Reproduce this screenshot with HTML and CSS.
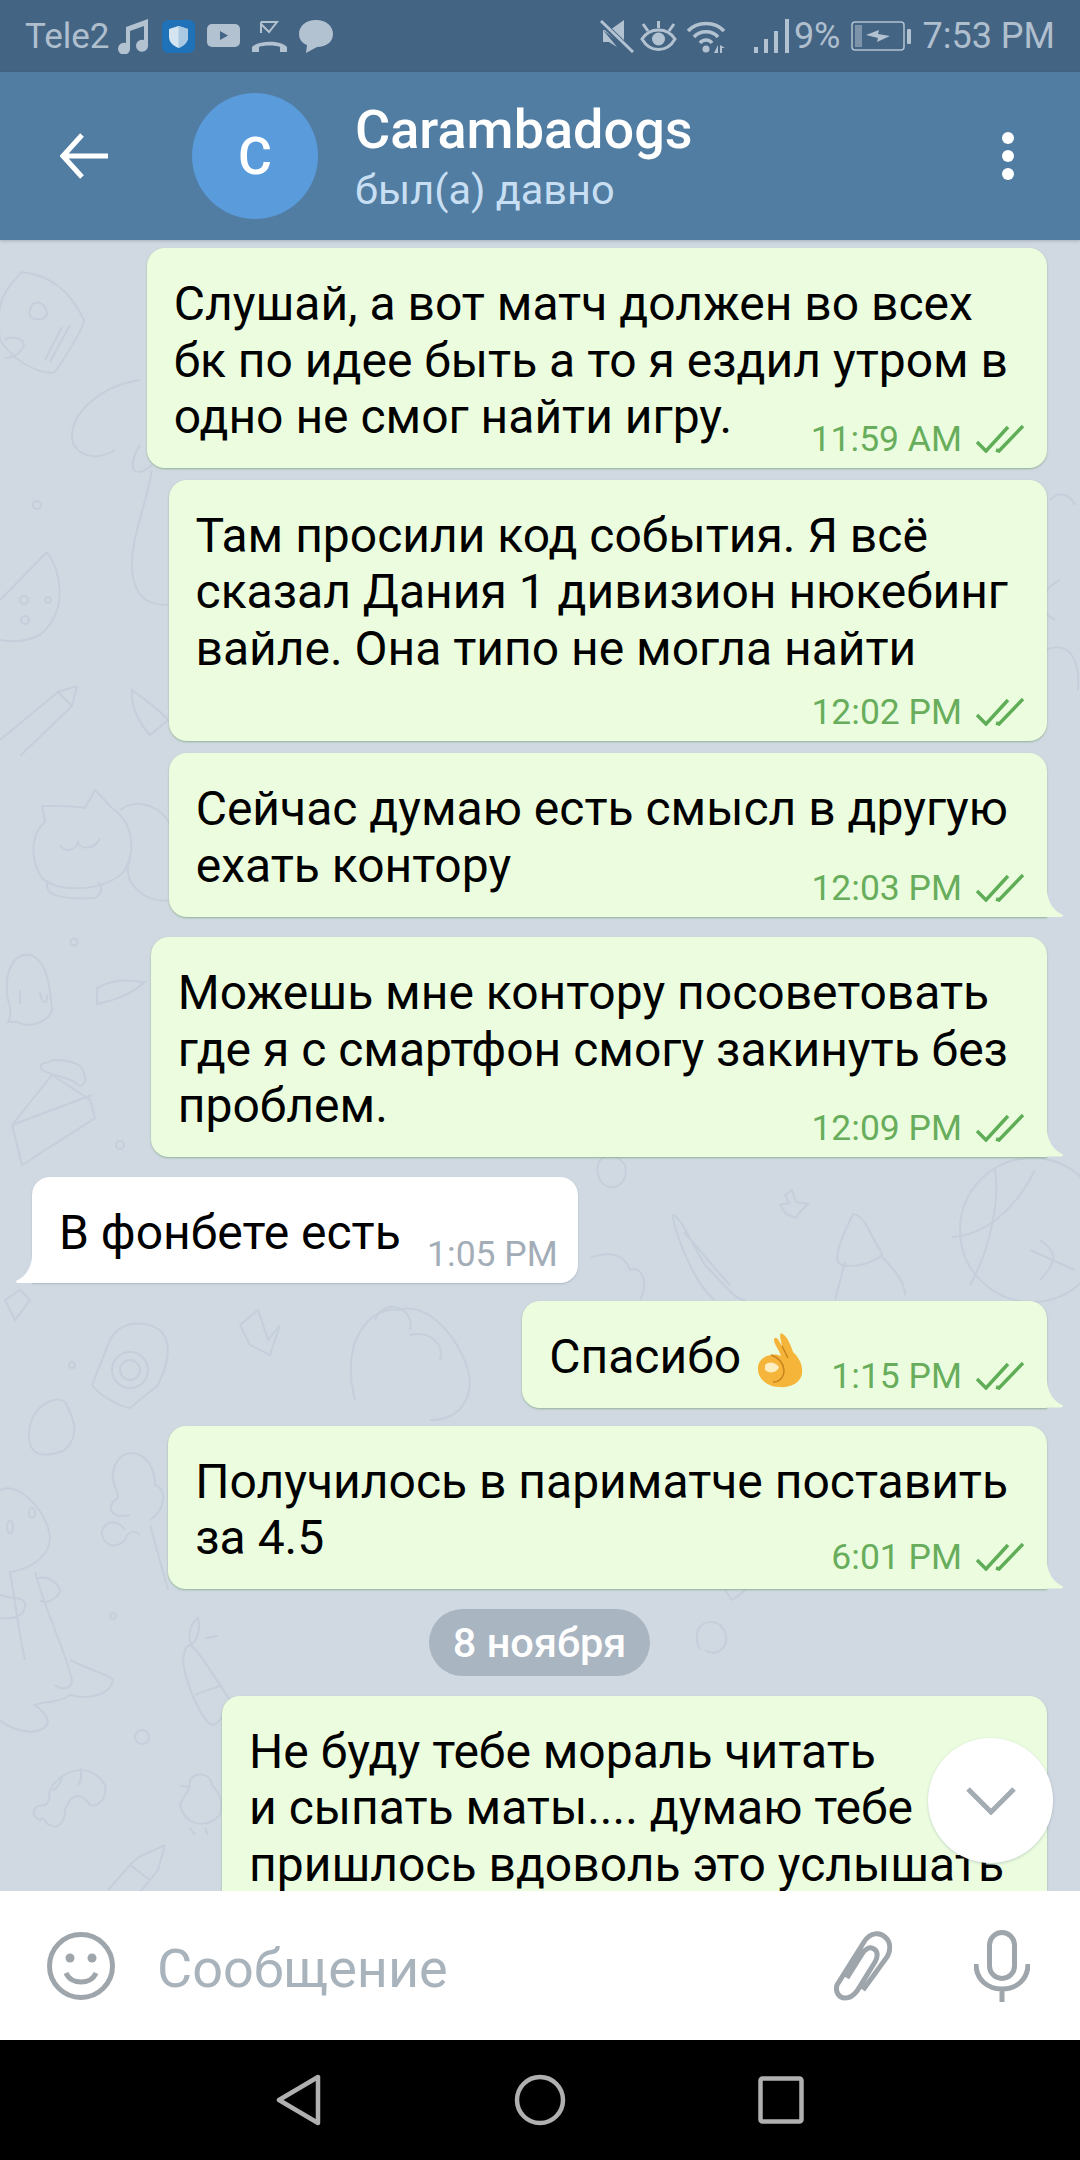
FILE: index.html
```html
<!DOCTYPE html>
<html>
<head>
  <title>Carambadogs</title>
  <meta charset="UTF-8" />
  <link rel="stylesheet" href="styles.css">
</head>
<body>
  <div class="status">
    <div class="status-left">
      <span class="carrier">Tele2</span>
      <svg class="ic" width="32" height="36" viewBox="0 0 32 36"><path class="fill" d="M8 9 L30 1 V27 A6 6 0 1 1 26 22 V8 L12 13 V30 A6 6 0 1 1 8 25 Z"/></svg>
      <svg class="ic tile" width="33" height="33" viewBox="0 0 33 33"><rect width="33" height="33" rx="6" fill="#1f72b8"/><path d="M16.500 6 L26 9 V17 C26 23 21 26 16.500 28 C12 26 7 23 7 17 V9 Z" fill="#d4e4f0"/><path d="M16.500 6 L26 9 V17 C26 23 21 26 16.500 28 Z" fill="#a9c9e2"/></svg>
      <svg class="ic" width="33" height="24" viewBox="0 0 33 24"><rect class="fill" width="33" height="23" rx="5"/><path d="M13 7 L21 11.500 L13 16 Z" fill="#446484"/></svg>
      <svg class="ic" width="35" height="31" viewBox="0 0 35 31"><path class="line" d="M9 1 H25 L17 11 L9 3 V12" stroke-width="2"/><path class="fill" d="M0 31 V26 C6 19 29 19 35 26 V31 H28 V26 C24 24 11 24 7 26 V31 Z"/></svg>
      <svg class="ic" width="34" height="33" viewBox="0 0 34 33"><path class="fill" d="M17 0 C27 0 34 6 34 14 C34 22 27 27 18 27 L7 33 L8 25 C3 23 0 19 0 14 C0 6 7 0 17 0 Z"/></svg>
    </div>
    <div class="status-right">
      <svg class="ic mute" width="34" height="33" viewBox="0 0 34 33"><path class="fill" d="M3 10 H10 L24 0 V13 L24 26 Z M3 10 V22 H9 L17 27 Z"/><path d="M0 1 L32 32" stroke="#446484" stroke-width="6"/><path class="line" d="M1 1 L33 32" stroke-width="3"/></svg>
      <svg class="ic" width="37" height="31" viewBox="0 0 37 31"><path class="line" d="M2 18 C10 6 27 6 35 18 C27 32 10 32 2 18 Z M3 3 L8 10 M18.500 0 V7 M34 3 L29 10" stroke-width="3"/><circle class="fill" cx="18.500" cy="18" r="6.500"/></svg>
      <svg class="ic" width="40" height="33" viewBox="0 0 40 33"><path class="line" d="M1 11 C10 1 28 1 37 11 M7 17 C13 10 25 10 31 17 M13 23 C16 19 22 19 25 23" stroke-width="3.500"/><circle class="fill" cx="19" cy="29" r="3.500"/><path class="fill" d="M31 25 V33 H27 Z M33 25 L38 28 H35 V33 H33 Z"/></svg>
      <svg class="ic sig" width="36" height="34" viewBox="0 0 36 34"><path class="fill" d="M0 28 h4 v6 h-4 Z M10 20 h4 v14 h-4 Z M20 12 h4 v22 h-4 Z M31 0 h4 v34 h-4 Z"/></svg>
      <span class="pct">9%</span>
      <svg class="ic bat" width="60" height="30" viewBox="0 0 60 30"><rect class="line" x="1" y="1" width="52" height="28" rx="3" stroke-width="1.500"/><rect class="fill" x="4" y="4" width="7" height="22" opacity=".5"/><path class="fill" d="M15 14 L28 9 L27 13 L39 15 L26 21 L27 17 Z"/><rect class="fill" x="56" y="8" width="4" height="15" rx="1"/></svg>
      <span class="clock">7:53 PM</span>
    </div>
  </div>

  <header class="topbar">
    <svg class="back" width="48" height="46" viewBox="0 0 48 46"><path d="M22 2 L3 23 L22 44 M3 23 H48" fill="none" stroke="#fff" stroke-width="5"/></svg>
    <div class="avatar">C</div>
    <div class="who">
      <div class="who-name">Carambadogs</div>
      <div class="who-seen">был(а) давно</div>
    </div>
    <div class="dots"><i></i><i></i><i></i></div>
  </header>

  <main class="chat">
    <svg class="doodles" width="1080" height="1652" viewBox="0 240 1080 1652">
      <!-- pillow -->
      <path d="M22 272 C5 290 -5 300 0 340 C20 370 50 375 55 372 C70 350 85 325 84 320 C70 290 50 275 22 272 Z M62 327 L45 360 M70 325 L50 362"/>
      <path d="M30 310 C32 298 45 302 46 310 C50 318 40 320 38 319 C32 320 28 316 30 310 Z M5 340 C10 335 24 338 24 345 C20 355 12 358 4 358"/>
      <!-- mushroom top left -->
      <path d="M72 440 C70 410 105 385 140 380 M72 440 C76 455 95 462 115 450 M140 445 C125 470 135 480 152 465 M152 470 C145 510 130 540 132 570 C135 600 150 605 168 605"/>
      <!-- watermelon -->
      <path d="M47 552 C60 570 70 610 40 635 C20 645 5 640 0 640 M47 552 L0 600"/>
      <circle cx="24" cy="600" r="4"/><circle cx="48" cy="600" r="3"/><circle cx="25" cy="620" r="4"/><circle cx="37" cy="505" r="4"/>
      <!-- pencil -->
      <path d="M77 686 L58 692 L0 740 M77 686 L72 706 L20 756 M58 692 L72 706"/>
      <path d="M132 690 C145 700 160 710 168 720 L150 735 C140 725 130 705 132 690 Z"/>
      <!-- cat -->
      <path d="M42 806 L45 822 C30 835 30 860 42 878 C60 895 110 890 125 870 C138 845 130 820 112 808 L95 790 L85 808 C70 805 55 806 42 806 Z"/>
      <path d="M60 845 C65 852 75 852 78 842 C80 850 95 850 100 838 M48 880 C42 895 60 900 95 898 C105 892 100 885 98 882 M120 810 C140 795 165 810 170 825 M130 860 C120 880 145 905 170 900"/>
      <!-- ghost -->
      <path d="M8 1000 C3 970 15 952 30 955 C48 960 50 990 52 1010 C50 1020 30 1030 18 1022 L8 1022 C12 1015 10 1005 8 1000 Z M20 990 V1004 M40 992 C42 1005 48 1005 47 995"/>
      <circle cx="74" cy="942" r="3.500"/>
      <path d="M97 988 C120 975 140 983 145 982 C130 995 115 1000 97 1004 Z"/>
      <!-- cake -->
      <path d="M12 1125 L52 1075 L90 1100 L95 1118 L22 1165 Z M12 1125 L92 1095 M12 1125 L22 1165 M42 1070 C36 1060 50 1065 52 1060 C60 1060 75 1060 82 1068 C90 1085 80 1090 75 1082 C60 1075 50 1075 42 1070 Z"/>
      <circle cx="120" cy="1145" r="4"/>
      <!-- star, carrot, mushroom, ball -->
      <path d="M785 1195 L792 1190 L796 1202 L808 1204 L800 1212 L796 1218 L786 1214 L780 1205 L789 1203 Z"/>
      <path d="M672 1215 C680 1215 690 1240 705 1265 C725 1285 735 1300 745 1300 M672 1215 C680 1250 700 1290 715 1300 M684 1232 C700 1250 720 1275 730 1285"/>
      <path d="M853 1214 C840 1240 835 1255 838 1262 C845 1270 870 1265 882 1255 L880 1250 C870 1235 865 1215 853 1214 Z M845 1262 L835 1300 M880 1255 C890 1265 905 1280 905 1295"/>
      <circle cx="1032" cy="1230" r="72"/>
      <path d="M952 1237 C985 1235 1015 1210 1035 1170 M995 1170 C1000 1200 990 1250 970 1285 M1030 1250 L1075 1270 M1040 1280 C1060 1260 1055 1250 1040 1240"/>
      <path d="M600 1180 C590 1160 610 1145 625 1165 C630 1185 610 1195 600 1180 Z M590 1258 C610 1250 625 1255 630 1270 C640 1265 650 1280 640 1300"/>
      <!-- camera, frog, star left -->
      <path d="M92 1385 L110 1340 C120 1320 145 1320 160 1330 C175 1345 165 1370 158 1385 L130 1408 C115 1405 100 1395 92 1385 Z"/>
      <circle cx="130" cy="1370" r="18"/><circle cx="130" cy="1370" r="10"/>
      <path d="M258 1310 L268 1340 L280 1325 L270 1355 L250 1345 L240 1325 Z"/>
      <path d="M355 1400 C340 1340 370 1305 400 1310 C430 1300 465 1345 470 1380 C470 1400 460 1420 430 1420 M375 1320 A18 18 0 1 1 410 1330 M410 1335 C430 1330 445 1345 440 1360"/>
      <circle cx="72" cy="1365" r="3"/>
      <path d="M10 1425 C5 1455 20 1460 45 1450 C60 1435 55 1420 45 1402 C35 1395 15 1405 10 1425 Z" transform="translate(20 0)"/>
      <!-- dino -->
      <path d="M0 1490 C20 1480 50 1515 50 1540 C48 1560 25 1570 10 1572 C15 1600 20 1640 25 1660 M35 1572 C45 1610 65 1650 72 1680 C72 1690 60 1690 55 1685 M70 1660 C90 1670 110 1675 113 1680 C110 1695 90 1700 70 1695 C55 1705 45 1700 35 1705 C55 1720 50 1730 30 1732 C15 1730 5 1725 0 1720"/>
      <path d="M38 1578 C50 1575 60 1585 60 1592 C55 1600 45 1605 40 1600 M0 1595 C10 1600 25 1595 25 1605 C25 1615 15 1620 0 1618"/>
      <ellipse cx="10" cy="1527" rx="3" ry="6"/><ellipse cx="32" cy="1513" rx="3" ry="5"/>
      <!-- tree -->
      <path d="M150 1520 C165 1510 168 1490 155 1485 C155 1455 130 1445 118 1460 C105 1480 120 1490 118 1498 C105 1505 110 1520 130 1515 M150 1525 L168 1590 M125 1530 C115 1515 100 1525 102 1535 C105 1545 115 1550 125 1540 C128 1530 135 1530 140 1535"/>
      <circle cx="113" cy="1616" r="3"/>
      <!-- popsicle -->
      <path d="M190 1645 C200 1650 222 1690 230 1700 C225 1710 220 1725 212 1725 C200 1720 180 1670 184 1655 C184 1650 187 1645 190 1645 Z M195 1695 C205 1690 210 1690 222 1685 M198 1618 C188 1625 188 1640 192 1645 C200 1635 200 1625 198 1618 Z M205 1638 L218 1636"/>
      <circle cx="142" cy="1737" r="7"/>
      <!-- shrimp -->
      <path d="M50 1790 C60 1770 90 1760 105 1785 C108 1800 95 1808 90 1805 C80 1790 70 1795 65 1810 C65 1822 58 1830 50 1825 C45 1825 45 1815 40 1820 C30 1815 32 1805 45 1805 C52 1800 48 1795 50 1790 Z M80 1767 C82 1775 82 1780 78 1785 M62 1778 C60 1785 55 1790 52 1790"/>
      <!-- chick -->
      <path d="M190 1780 C195 1772 210 1772 212 1785 C215 1790 225 1795 220 1815 C205 1830 185 1825 180 1805 C182 1795 190 1795 190 1780 Z M180 1786 L190 1787 M190 1828 L195 1835 M205 1828 L208 1835"/>
      <!-- bottle -->
      <path d="M165 1845 L150 1852 C140 1855 135 1860 130 1865 L108 1890 M165 1845 L158 1870 L150 1880 L140 1892 M130 1865 L150 1880"/>
      <path d="M1050 500 C1060 490 1070 495 1075 505 M1060 580 C1040 590 1035 610 1055 620 M1045 650 C1070 640 1080 660 1078 690"/>
      <path d="M20 1290 L30 1300 L15 1320 L5 1300 Z"/>
      <path d="M630 1490 C640 1475 660 1480 660 1495 C660 1510 640 1525 632 1530 C620 1515 615 1495 630 1490 Z" transform="translate(100 70)"/>
      <path d="M700 1650 C690 1630 705 1615 720 1625 C735 1640 720 1660 705 1650"/>
    </svg>

    <div class="msgs">
      <div class="bubble out">
        Слушай, а вот матч должен во всех<br>бк по идее быть а то я ездил утром в<br>одно не смог найти игру.
        <span class="meta">11:59 AM <svg class="checks" width="48" height="28" viewBox="0 0 48 28"><path d="M1 17 L10 26 L32 2 M20 25 L23 26 L47 1"/></svg></span>
      </div>
      <div class="bubble out near meta-below">
        Там просили код события. Я всё<br>сказал Дания 1 дивизион нюкебинг<br>вайле. Она типо не могла найти
        <span class="meta">12:02 PM <svg class="checks" width="48" height="28" viewBox="0 0 48 28"><path d="M1 17 L10 26 L32 2 M20 25 L23 26 L47 1"/></svg></span>
      </div>
      <div class="bubble out near tail two-line">
        Сейчас думаю есть смысл в другую<br>ехать контору
        <span class="meta">12:03 PM <svg class="checks" width="48" height="28" viewBox="0 0 48 28"><path d="M1 17 L10 26 L32 2 M20 25 L23 26 L47 1"/></svg></span>
      </div>
      <div class="bubble out tail far">
        Можешь мне контору посоветовать<br>где я с смартфон смогу закинуть без<br>проблем.
        <span class="meta">12:09 PM <svg class="checks" width="48" height="28" viewBox="0 0 48 28"><path d="M1 17 L10 26 L32 2 M20 25 L23 26 L47 1"/></svg></span>
      </div>
      <div class="bubble in tail far short-in">
        В фонбете есть
        <span class="meta">1:05 PM</span>
      </div>
      <div class="bubble out tail short-out raised">
        Спасибо
        <svg class="ok" width="46" height="56" viewBox="0 0 46 56"><path d="M24 1 C30 3 34 14 36 20 C42 26 46 32 45 42 C43 52 32 56 22 55 C10 55 1 46 1 38 C0 30 6 24 14 23 C18 22 22 23 24 24 C22 18 17 12 17 8 C17 5 20 5 22 9 L25 14 C24 9 22 3 24 1 Z" fill="#f5b53a"/><path d="M8 33 C12 29 18 30 22 35 C20 41 12 42 8 38 Z" fill="#fdeec0"/><path d="M25 14 L31 26 M14 23 C20 25 26 30 27 38 C27 46 22 50 16 50" fill="none" stroke="#c9831f" stroke-width="1.500"/></svg>
        <span class="meta">1:15 PM <svg class="checks" width="48" height="28" viewBox="0 0 48 28"><path d="M1 17 L10 26 L32 2 M20 25 L23 26 L47 1"/></svg></span>
      </div>
      <div class="bubble out tail raised">
        Получилось в париматче поставить<br>за 4.5
        <span class="meta">6:01 PM <svg class="checks" width="48" height="28" viewBox="0 0 48 28"><path d="M1 17 L10 26 L32 2 M20 25 L23 26 L47 1"/></svg></span>
      </div>
      <div class="date">8 ноября</div>
      <div class="bubble out cut">
        Не буду тебе мораль читать<br>и сыпать маты.... думаю тебе<br>пришлось вдоволь это услышать
      </div>
    </div>

    <div class="scroll-down">
      <svg width="50" height="28" viewBox="0 0 50 28"><path d="M2 2 L25 25 L48 2" fill="none" stroke="#a3abb3" stroke-width="5"/></svg>
    </div>
  </main>

  <div class="composer">
    <svg class="smile" width="68" height="70" viewBox="0 0 68 70"><circle class="cline" cx="34" cy="35" r="31.500"/><circle cx="23" cy="27" r="4.500" fill="#9ea5ab"/><circle cx="45" cy="27" r="4.500" fill="#9ea5ab"/><path class="cline" d="M19 42 C24 54 44 54 49 42"/></svg>
    <div class="placeholder">Сообщение</div>
    <svg class="clip" width="58" height="70" viewBox="0 0 58 70"><path class="cline" d="M11 67 C5 67 1 61 3 54 L30 11 C36 1 46 1 51 6 C57 11 57 19 53 26 L29 59 M11 67 C17 67 20 64 23 60 L41 31 C44 26 44 20 40 18 C36 15 31 18 28 23 L13 47"/></svg>
    <svg class="mic" width="56" height="72" viewBox="0 0 56 72"><rect class="cline" x="15.500" y="2.500" width="25" height="46" rx="12.500"/><path class="cline" d="M2 34 C2 50 14 59 28 59 C42 59 54 50 54 34 M28 59 V72"/></svg>
  </div>

  <nav class="navbar">
    <svg width="46" height="52" viewBox="0 0 46 52"><path class="nline" d="M42 3 V49 L3 26 Z"/></svg>
    <svg width="52" height="52" viewBox="0 0 52 52"><circle class="nline" cx="26" cy="26" r="23"/></svg>
    <svg width="46" height="48" viewBox="0 0 46 48"><rect class="nline" x="2.500" y="2.500" width="41" height="43" rx="2"/></svg>
  </nav>
</body>
</html>
```

FILE: styles.css
```css
* {
  box-sizing: border-box;
}
html, body {
  margin: 0;
  padding: 0;
}
body {
  width: 1080px;
  height: 2160px;
  display: flex;
  flex-direction: column;
  overflow: hidden;
  font-family: Roboto, "Liberation Sans", sans-serif;
  background: #000;
}

/* status bar */
.status {
  height: 72px;
  flex: none;
  display: flex;
  justify-content: space-between;
  align-items: center;
  padding: 0 25px;
  background: #446484;
  color: #b0bfce;
  font-size: 36px;
}
.status-left, .status-right {
  display: flex;
  align-items: center;
}
.status-left {
  gap: 12px;
}
.status-right {
  gap: 10px;
}
.carrier {
  font-size: 35px;
  margin-right: -4px;
}
.ic .fill {
  fill: #b3c2d0;
}
.ic .line {
  fill: none;
  stroke: #b3c2d0;
}
.mute {
  margin-right: -4px;
}
.sig {
  margin-left: 17px;
}
.sig + .pct {
  margin-left: -6px;
}
.bat {
  margin-left: 0;
}
.clock {
  margin-left: 2px;
}

/* top bar */
.topbar {
  height: 168px;
  flex: none;
  display: flex;
  align-items: center;
  padding: 0 60px;
  background: #517da2;
  color: #fff;
  position: relative;
  z-index: 2;
  box-shadow: 0 1px 3px rgba(60, 80, 100, 0.3);
}
.back {
  margin-right: 84px;
}
.avatar {
  width: 126px;
  height: 126px;
  flex: none;
  display: flex;
  align-items: center;
  justify-content: center;
  border-radius: 50%;
  background: #5a9bdc;
  font-size: 52px;
  font-weight: 500;
  margin-right: 37px;
}
.who {
  flex: 1;
  margin-top: 6px;
}
.who-name {
  font-size: 54px;
  font-weight: 500;
  line-height: 60px;
}
.who-seen {
  font-size: 41.500px;
  line-height: 59px;
  color: #c8dff3;
}
.dots {
  display: flex;
  flex-direction: column;
  gap: 6px;
  margin-right: 6px;
}
.dots i {
  width: 12px;
  height: 12px;
  border-radius: 50%;
  background: #fff;
}

/* messages */
.chat {
  flex: 1;
  min-height: 0;
  position: relative;
  overflow: hidden;
  background: #d0d9e2;
}
.doodles {
  position: absolute;
  left: 0;
  top: 0;
  fill: none;
  stroke: #c5cfdb;
  stroke-width: 2;
}
.msgs {
  position: relative;
  display: flex;
  flex-direction: column;
  align-items: flex-end;
  padding: 8px 33px 0 32px;
}
.bubble {
  position: relative;
  padding: 28px 39px 22px 27px;
  margin-top: 18px;
  border-radius: 18px;
  font-size: 48px;
  line-height: 56.500px;
  color: #000;
  white-space: nowrap;
}
.bubble:first-child {
  margin-top: 0;
}
.bubble.near {
  margin-top: 12px;
}
.bubble.far {
  margin-top: 20px;
}
.bubble.out {
  background: #ecfddf;
  box-shadow: 0 1px 2px rgba(90, 140, 80, 0.5);
}
.bubble.in {
  background: #fff;
  align-self: flex-start;
  box-shadow: 0 1px 2px rgba(100, 120, 140, 0.35);
}
.meta-below {
  padding-bottom: 64px;
}
.two-line {
  padding-bottom: 23px;
}
.short-in {
  padding-right: 177px;
}
.short-out {
  padding-right: 244px;
}
.cut {
  margin-top: 20px;
  padding-right: 43px;
  padding-bottom: 60px;
}
.meta {
  position: absolute;
  right: 23px;
  bottom: 5px;
  display: flex;
  align-items: center;
  gap: 14px;
  font-size: 35.500px;
  line-height: 48px;
  color: #68ad5c;
}
.raised .meta {
  bottom: 8px;
}
.in .meta {
  right: 20px;
  color: #a3adb7;
}
.checks {
  fill: none;
  stroke: #5fae57;
  stroke-width: 3.500;
}
.ok {
  vertical-align: -5px;
  margin: -10px 0 -10px 4px;
}
.tail.out {
  border-bottom-right-radius: 0;
}
.tail.out::after {
  content: "";
  position: absolute;
  right: -16px;
  bottom: 0;
  width: 16px;
  height: 26px;
  background: #ecfddf;
  clip-path: path("M0 0 C1 12 7 20 16 24 Q16 26 14 26 L0 26 Z");
}
.tail.in {
  border-bottom-left-radius: 0;
}
.tail.in::after {
  content: "";
  position: absolute;
  left: -16px;
  bottom: 0;
  width: 16px;
  height: 26px;
  background: #fff;
  clip-path: path("M16 0 C15 12 9 20 0 24 Q0 26 2 26 L16 26 Z");
}
.date {
  align-self: center;
  margin-top: 20px;
  padding: 0 24px;
  height: 67px;
  line-height: 67px;
  border-radius: 34px;
  background: #a9b5c1;
  color: #fff;
  font-size: 41.500px;
  font-weight: 500;
}
.scroll-down {
  position: absolute;
  left: 928px;
  top: 1498px;
  width: 125px;
  height: 125px;
  display: flex;
  align-items: center;
  justify-content: center;
  border-radius: 50%;
  background: #fff;
  box-shadow: 0 1px 3px rgba(90, 110, 130, 0.3);
}

/* input row */
.composer {
  height: 149px;
  flex: none;
  display: flex;
  align-items: center;
  padding: 0 50px 0 47px;
  background: #fff;
}
.cline {
  fill: none;
  stroke: #9ea5ab;
  stroke-width: 5;
}
.placeholder {
  flex: 1;
  margin-left: 42px;
  padding-top: 5px;
  font-size: 54px;
  color: #a9b3bc;
}
.clip {
  margin-right: 82px;
}

/* android nav */
.navbar {
  height: 120px;
  flex: none;
  display: flex;
  align-items: center;
  justify-content: center;
  gap: 192px;
  background: #000;
}
.nline {
  fill: none;
  stroke: #b0b0b0;
  stroke-width: 4.500;
  stroke-linejoin: round;
}
```
